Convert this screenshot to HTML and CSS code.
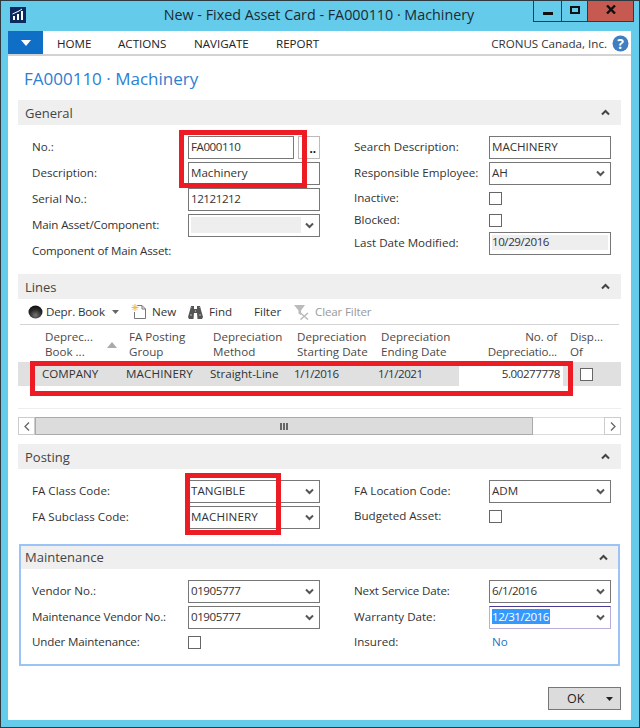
FILE: index.html
```html
<!DOCTYPE html>
<html lang="en">
<head>
<meta charset="utf-8">
<title>New - Fixed Asset Card</title>
<link rel="stylesheet" href="styles.css">
</head>
<body>
<svg class="defs" width="0" height="0" aria-hidden="true">
  <symbol id="chev" viewBox="0 0 9 7"><path d="M1 1.500 4.500 5 8 1.500" fill="none" stroke="#555" stroke-width="2"/></symbol>
  <symbol id="up" viewBox="0 0 9 7"><path d="M1 5.500 4.500 2 8 5.500" fill="none" stroke="#444" stroke-width="2"/></symbol>
</svg>
<div class="window">
  <header class="titlebar">
    <div class="tb-left">
      <svg class="app-icon" width="16" height="16" viewBox="0 0 16 16"><rect width="16" height="16" fill="#0d2a5e"/><path d="M3 13V9h2v4zM7 13V7h2v6zM11 13V4h2v9z" fill="#fff"/><path d="M2.500 7 9 4l3-2" fill="none" stroke="#fff" stroke-width="1"/></svg>
    </div>
    <div class="title">New - Fixed Asset Card - FA000110 · Machinery</div>
    <div class="controls">
      <div class="ctl ctl-min"><span class="min-glyph"></span></div>
      <div class="ctl ctl-max"><span class="max-glyph"></span></div>
      <div class="ctl ctl-close"><svg width="10" height="9" viewBox="0 0 10 9"><path d="M1 .5 9 8.500M9 .5 1 8.500" stroke="#111" stroke-width="2.400" fill="none"/></svg></div>
    </div>
  </header>
  <div class="client">
    <nav class="ribbon">
      <div class="app-btn"><svg width="10" height="6" viewBox="0 0 10 6"><path d="M0 0h10L5 6z" fill="#fff"/></svg></div>
      <div class="tabs"><span>HOME</span><span>ACTIONS</span><span>NAVIGATE</span><span>REPORT</span></div>
      <div class="company">CRONUS Canada, Inc.</div>
      <svg class="help" width="17" height="17" viewBox="0 0 17 17"><circle cx="8.500" cy="8.500" r="8" fill="#3f7fc1"/><text x="8.500" y="13.500" text-anchor="middle" class="help-q">?</text></svg>
    </nav>
    <main class="main">
      <h1 class="page-title">FA000110 · Machinery</h1>

      <section class="sec sec-general">
        <div class="sec-head"><span>General</span><svg width="9" height="7"><use href="#up"/></svg></div>
        <div class="form">
          <div class="col">
            <div class="row"><label>No.:</label><div class="input w-no num">FA000110</div><div class="dots">..</div></div>
            <div class="row"><label>Description:</label><div class="input">Machinery</div></div>
            <div class="row"><label>Serial No.:</label><div class="input num">12121212</div></div>
            <div class="row"><label class="tight">Main Asset/Component:</label><div class="input select"><span class="disabled-fill"></span><svg width="9" height="7"><use href="#chev"/></svg></div></div>
            <div class="row"><label class="wide tight">Component of Main Asset:</label></div>
          </div>
          <div class="col col-right">
            <div class="row"><label>Search Description:</label><div class="input">MACHINERY</div></div>
            <div class="row"><label>Responsible Employee:</label><div class="input select"><span>AH</span><svg width="9" height="7"><use href="#chev"/></svg></div></div>
            <div class="row row-check"><label>Inactive:</label><span class="check"></span></div>
            <div class="row row-check"><label>Blocked:</label><span class="check"></span></div>
            <div class="row"><label>Last Date Modified:</label><div class="input readonly"><span class="num">10/29/2016</span></div></div>
          </div>
        </div>
      </section>

      <section class="sec sec-lines">
        <div class="sec-head"><span>Lines</span><svg width="9" height="7"><use href="#up"/></svg></div>
        <div class="toolbar">
          <div class="tool tool-book">
            <svg width="15" height="14" viewBox="0 0 15 14"><defs><radialGradient id="globe" cx=".5" cy=".75" r=".7"><stop offset="0" stop-color="#777"/><stop offset=".6" stop-color="#2b2b2b"/><stop offset="1" stop-color="#111"/></radialGradient></defs><ellipse cx="7.500" cy="7" rx="7" ry="6.500" fill="url(#globe)"/></svg>
            <span class="tight">Depr. Book</span>
            <svg class="caret" width="7" height="4" viewBox="0 0 7 4"><path d="M0 0h7L3.500 4z" fill="#666"/></svg>
          </div>
          <div class="tool tool-new">
            <svg width="16" height="16" viewBox="0 0 16 16"><path d="M6 1.500h5l3.500 3.500v9.500h-11V8" fill="#fff" stroke="#777"/><path d="M11 1.500V5h3.500" fill="none" stroke="#777"/><path d="M4 0v7M.5 3.500h7M1.500 1 6.500 6M6.500 1l-5 5" stroke="#f2b84b" stroke-width="1"/></svg>
            <span>New</span>
          </div>
          <div class="tool tool-find">
            <svg width="15" height="14" viewBox="0 0 15 14"><path d="M3 1h3v3h3V1h3l1 4 2 7-1 2H9.500L9 8H6l-.5 6H1l-1-2 2-7z" fill="#555"/><path d="M2 10h2M11 10h2M4 2.500h-.5M11.500 2.500H11" stroke="#bbb"/><path d="M7 5h1v2H7z" fill="#999"/></svg>
            <span>Find</span>
          </div>
          <div class="tool tool-filter"><span>Filter</span></div>
          <div class="tool tool-clear">
            <svg width="15" height="16" viewBox="0 0 15 16"><path d="M0 1h11L7 6.500V11L4.500 9.500V6.500z" fill="#bbb"/><path d="M6.500 9 14 15.500M14 9l-7.500 6.500" stroke="#bbb" stroke-width="1.500"/></svg>
            <span class="tight">Clear Filter</span>
          </div>
        </div>
        <div class="grid grid-head">
          <span></span>
          <div class="th sorted">Deprec...<br>Book ...<svg class="sort" width="10" height="6" viewBox="0 0 10 6"><path d="M5 0l5 6H0z" fill="#aaa"/></svg></div>
          <div class="th">FA Posting<br>Group</div>
          <div class="th">Depreciation<br>Method</div>
          <div class="th">Depreciation<br>Starting Date</div>
          <div class="th">Depreciation<br>Ending Date</div>
          <div class="th th-num tight">No. of<br>Depreciatio...</div>
          <div class="th th-last">Disp...<br>Of</div>
        </div>
        <div class="grid grid-row">
          <span></span>
          <div class="td">COMPANY</div>
          <div class="td caps">MACHINERY</div>
          <div class="td">Straight-Line</div>
          <div class="td num">1/1/2016</div>
          <div class="td num">1/1/2021</div>
          <div class="td td-num num">5.00277778</div>
          <div class="td td-check"><span class="check"></span></div>
        </div>
        <div class="grid-foot"></div>
        <div class="scrollbar">
          <div class="sb-btn"><svg width="6" height="9" viewBox="0 0 6 9"><path d="M5 .5 1 4.500 5 8.500" fill="none" stroke="#666" stroke-width="1.300"/></svg></div>
          <div class="sb-thumb"><span class="grip"></span></div>
          <div class="sb-track"></div>
          <div class="sb-btn"><svg width="6" height="9" viewBox="0 0 6 9"><path d="M1 .5 5 4.500 1 8.500" fill="none" stroke="#666" stroke-width="1.300"/></svg></div>
        </div>
      </section>

      <section class="sec sec-posting">
        <div class="sec-head"><span>Posting</span><svg width="9" height="7"><use href="#up"/></svg></div>
        <div class="form">
          <div class="col">
            <div class="row"><label>FA Class Code:</label><div class="input select"><span>TANGIBLE</span><svg width="9" height="7"><use href="#chev"/></svg></div></div>
            <div class="row"><label>FA Subclass Code:</label><div class="input select"><span class="caps">MACHINERY</span><svg width="9" height="7"><use href="#chev"/></svg></div></div>
          </div>
          <div class="col col-right">
            <div class="row"><label>FA Location Code:</label><div class="input select"><span>ADM</span><svg width="9" height="7"><use href="#chev"/></svg></div></div>
            <div class="row row-check"><label>Budgeted Asset:</label><span class="check"></span></div>
          </div>
        </div>
      </section>

      <section class="sec sec-maint">
        <div class="sec-head"><span>Maintenance</span><svg width="9" height="7"><use href="#up"/></svg></div>
        <div class="form">
          <div class="col">
            <div class="row"><label>Vendor No.:</label><div class="input select"><span class="num">01905777</span><svg width="9" height="7"><use href="#chev"/></svg></div></div>
            <div class="row"><label class="tight">Maintenance Vendor No.:</label><div class="input select"><span class="num">01905777</span><svg width="9" height="7"><use href="#chev"/></svg></div></div>
            <div class="row row-check"><label class="tight">Under Maintenance:</label><span class="check"></span></div>
          </div>
          <div class="col col-right">
            <div class="row"><label class="tight">Next Service Date:</label><div class="input select"><span class="num">6/1/2016</span><svg width="9" height="7"><use href="#chev"/></svg></div></div>
            <div class="row"><label>Warranty Date:</label><div class="input select focus"><span class="selected num">12/31/2016</span><svg width="9" height="7"><use href="#chev"/></svg></div></div>
            <div class="row row-check"><label>Insured:</label><span class="link">No</span></div>
          </div>
        </div>
      </section>

      <footer class="footer">
        <div class="ok"><span>OK</span><svg width="7" height="4" viewBox="0 0 7 4"><path d="M0 0h7L3.500 4z" fill="#222"/></svg></div>
      </footer>
    </main>
    <div class="mark mark-no"></div>
    <div class="mark mark-line"></div>
    <div class="mark mark-post"></div>
  </div>
</div>
</body>
</html>
```

FILE: styles.css
```css
* { box-sizing: border-box; }
html, body { margin: 0; padding: 0; }
body { font-family: "Open Sans", "Noto Sans", sans-serif; font-size: 11.6px; color: #333; background: #fff; }
.defs { position: absolute; }

.num { letter-spacing: -.45px; }
.tight { letter-spacing: -.15px; }
.caps { letter-spacing: .15px; }

.window { width: 640px; height: 728px; background: #65cbea; border: 1px solid #2f3a40; display: flex; flex-direction: column; overflow: hidden; }

.titlebar { height: 30px; display: grid; grid-template-columns: 1fr auto 1fr; flex: none; }
.tb-left { padding: 6px 0 0 9px; }
.app-icon { display: block; }
.title { font-size: 14.3px; line-height: 27px; color: #1a2a33; white-space: nowrap; padding-right: 2px; }
.controls { display: flex; justify-content: flex-end; align-items: flex-start; padding-right: 5px; }
.ctl { height: 21px; border: 1px solid #2f3a40; border-top: 0; margin-left: -1px; display: flex; align-items: center; justify-content: center; }
.ctl-min { width: 29px; }
.ctl-max { width: 27px; }
.ctl-close { width: 47px; background: #c75a50; }
.min-glyph { width: 10px; height: 3px; background: #111; margin-top: 4px; }
.max-glyph { width: 10px; height: 8px; border: 2px solid #111; margin-top: -2px; }
.ctl-close svg { margin-top: -3px; }

.client { position: relative; flex: none; width: 623px; height: 689px; margin-left: 7px; background: #fff; }

.ribbon { height: 25px; border-bottom: 2px solid #d2d2d2; display: flex; align-items: center; padding-top: 1px; }
.app-btn { width: 35px; height: 23px; background: #0f6fc6; display: flex; align-items: center; justify-content: center; margin-top: -1px; }
.tabs { display: flex; margin-left: 14px; color: #222; }
.tabs span:nth-child(1) { width: 61px; }
.tabs span:nth-child(2) { width: 76px; }
.tabs span:nth-child(3) { width: 82px; }
.company { margin-left: auto; color: #333; }
.help { margin: 0 2px 0 5px; }
.help-q { font-family: "Open Sans", sans-serif; font-size: 14px; font-weight: 700; fill: #fff; }

.main { padding: 0 10px; }
.page-title { margin: 0; height: 44px; padding: 11px 0 0 6px; font-size: 17px; line-height: 24px; font-weight: 400; color: #2a80d2; }

.sec-head { height: 25px; background: #efefef; display: flex; align-items: center; justify-content: space-between; padding: 0 11px 0 7px; font-size: 13px; color: #444; }

.form { display: grid; grid-template-columns: 288px 257px; column-gap: 34px; padding: 11px 0 0 14px; }
.row { height: 26px; display: flex; align-items: flex-start; line-height: 22px; white-space: nowrap; }
.row label { width: 156px; flex: none; }
.col-right .row label { width: 135px; }
.row label.wide { width: auto; }
.row-check { height: 22px; line-height: 20px; }
.input { width: 132px; height: 23px; border: 1px solid #777; padding: 0 2px; line-height: 19px; color: #333; flex: none; }
.col-right .input { width: 122px; }
.w-no { width: 106px; }
.dots { width: 22px; height: 23px; margin-left: 4px; border: 1px solid #bbb; color: #111; font-weight: 700; text-align: right; padding-right: 3px; line-height: 24px; }
.select { display: flex; align-items: center; justify-content: space-between; padding-right: 5px; }
.select span:first-child { margin-bottom: 2px; }
.select .disabled-fill { width: 110px; height: 16px; background: #eee; margin-bottom: 0; }
.readonly span { display: block; height: 15px; line-height: 13px; margin-top: 2px; background: #eee; }
.check { width: 13px; height: 13px; border: 1px solid #666; background: #fff; margin-top: 4px; flex: none; }
.link { color: #1e73c8; padding-left: 3px; }
.focus { border-color: #b9aedb; border-top-color: #4b3a94; }
.selected { background: #3399ff; color: #fff; height: 15px; line-height: 15px; padding-right: 1px; }
.select .selected { margin-bottom: 0; }

.sec-general { height: 174px; }
.sec-lines { height: 170px; }
.sec-posting { height: 100px; }

.toolbar { height: 26px; margin: 0 2px; border-bottom: 1px solid #d5d5d5; display: flex; align-items: center; }
.tool { display: flex; align-items: center; flex: none; }
.tool-book { width: 103px; margin-left: 8px; gap: 3px; }
.tool-book .caret { margin-left: 4px; }
.tool-new { width: 57px; gap: 5px; }
.tool-find { width: 66px; gap: 6px; }
.tool-filter { width: 40px; }
.tool-clear { gap: 6px; color: #999; }

.grid { display: grid; grid-template-columns: 24px 84px 84px 84px 84px 81px 104px 58px; }
.grid-head { height: 37px; align-items: start; padding-top: 4px; }
.th { line-height: 15px; padding-left: 3px; color: #4a4a4a; white-space: nowrap; position: relative; }
.sort { position: absolute; left: 65px; top: 13px; }
.th-num { text-align: right; padding: 0 6px 0 0; }
.th-last { padding-left: 7px; }
.grid-row { height: 24px; background: #e0e0e0; line-height: 24px; }
.td { white-space: nowrap; }
.td-num { background: #fff; text-align: right; padding-right: 3px; height: 24px; }
.td-check { padding-left: 17px; display: flex; }
.td-check .check { margin-top: 6px; }
.grid-foot { height: 23px; border-bottom: 1px solid #eee; }

.scrollbar { height: 18px; margin-top: 8px; display: flex; }
.sb-btn { width: 17px; border: 1px solid #ccc; background: #fff; display: flex; align-items: center; justify-content: center; flex: none; }
.sb-thumb { width: 498px; background: #dcdcdc; border: 1px solid #aaa; display: flex; align-items: center; justify-content: center; flex: none; }
.grip { width: 8px; height: 7px; background: repeating-linear-gradient(90deg, #666 0 2px, transparent 2px 3px); }
.sb-track { flex: 1; border-top: 1px solid #ddd; border-bottom: 1px solid #ddd; }

.sec-maint { margin: 0 1px; height: 122px; border: 2px solid #9cc3f5; }
.sec-maint .sec-head { height: 23px; padding: 0 10px 1px 4px; }
.sec-maint .form { padding-left: 11px; }

.footer { display: flex; justify-content: flex-end; margin-top: 21px; }
.ok { width: 73px; height: 23px; background: #dcdcdc; border: 1px solid #777; display: flex; align-items: center; justify-content: space-between; padding: 0 7px 0 18px; font-size: 12.500px; color: #222; }

.mark { position: absolute; border: 5px solid #ed1c24; }
.mark-no { left: 171px; top: 99px; width: 128px; height: 58px; }
.mark-line { left: 22px; top: 330px; width: 543px; height: 35px; }
.mark-post { left: 177px; top: 442px; width: 96px; height: 62px; }
```
